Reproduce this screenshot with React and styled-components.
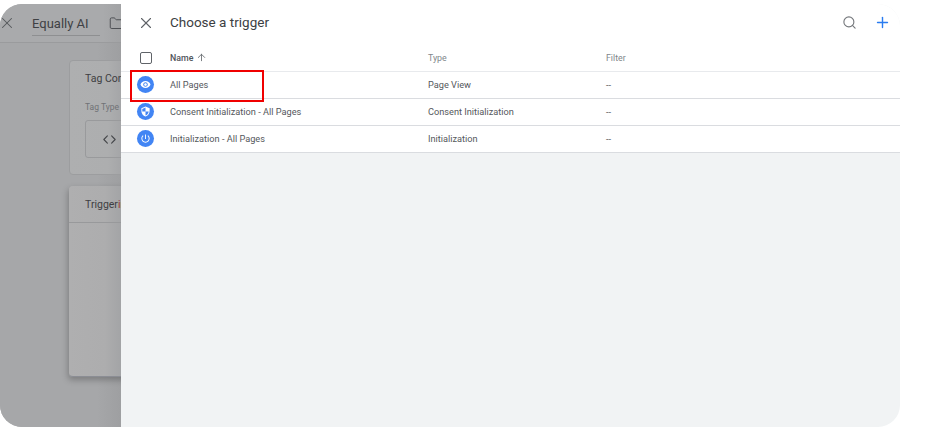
import React from 'react';
import styled, { createGlobalStyle } from 'styled-components';
import { X, Folder, ChevronsLeftRight, Search, Plus, ArrowUp } from 'lucide-react';

const triggers = [
    { name: 'All Pages', type: 'Page View', icon: 'eye' },
    { name: 'Consent Initialization - All Pages', type: 'Consent Initialization', icon: 'shield' },
    { name: 'Initialization - All Pages', type: 'Initialization', icon: 'power' },
];

const iconPaths = {
    eye: 'M12 4.5C7 4.5 2.73 7.61 1 12c1.73 4.39 6 7.5 11 7.5s9.27-3.11 11-7.5c-1.73-4.39-6-7.5-11-7.5zM12 17c-2.76 0-5-2.24-5-5s2.24-5 5-5 5 2.24 5 5-2.24 5-5 5zm0-8c-1.66 0-3 1.34-3 3s1.34 3 3 3 3-1.34 3-3-1.34-3-3-3z',
    shield: 'M12 1L3 5v6c0 5.55 3.84 10.74 9 12 5.16-1.26 9-6.45 9-12V5l-9-4zm0 10.99h7c-.53 4.12-3.28 7.79-7 8.94V12H5V6.3l7-3.11v8.8z',
    power: 'M13 3h-2v10h2V3zm4.83 2.17l-1.42 1.42C17.99 7.86 19 9.81 19 12c0 3.87-3.13 7-7 7s-7-3.13-7-7c0-2.19 1.01-4.14 2.58-5.42L6.17 5.17C4.23 6.82 3 9.26 3 12c0 4.97 4.03 9 9 9s9-4.03 9-9c0-2.74-1.23-5.18-3.17-6.83z',
};

export default function App() {
    return (
        <>
            <GlobalStyle />
            <Shell>
                <Backdrop>
                    <BackHeader>
                        <BackClose>
                            <X size={18} strokeWidth={1.4} color="#55585c" />
                        </BackClose>
                        <BackName>Equally AI</BackName>
                        <BackFolder>
                            <Folder size={15} strokeWidth={1.5} color="#4a4c50" />
                        </BackFolder>
                    </BackHeader>
                    <BackBody>
                        <TagCard>
                            <CardLabel>Tag Configuration</CardLabel>
                            <SmallLabel>Tag Type</SmallLabel>
                            <TypeBox>
                                <ChevronsLeftRight size={17} strokeWidth={1.6} color="#45474a" />
                            </TypeBox>
                        </TagCard>
                        <TriggerCard>
                            <TriggerHead>
                                <CardLabel>
                                    Trigger<TriggerTail>ing</TriggerTail>
                                </CardLabel>
                            </TriggerHead>
                        </TriggerCard>
                    </BackBody>
                </Backdrop>
                <Panel>
                    <PanelHeader>
                        <CloseSlot>
                            <X size={18} strokeWidth={1.5} color="#5f6368" />
                        </CloseSlot>
                        <PanelTitle>Choose a trigger</PanelTitle>
                        <Actions>
                            <Search size={15} strokeWidth={1.8} color="#75787c" />
                            <Plus size={17} strokeWidth={2} color="#2a7cf0" />
                        </Actions>
                    </PanelHeader>
                    <Table>
                        <HeadRow>
                            <Cell>
                                <Checkbox />
                            </Cell>
                            <NameHead>
                                Name <ArrowUp size={11} strokeWidth={1.8} color="#5f6368" />
                            </NameHead>
                            <HeadText>Type</HeadText>
                            <HeadText>Filter</HeadText>
                        </HeadRow>
                        {triggers.map((t) => (
                            <Row key={t.name}>
                                <Cell>
                                    <IconDot>
                                        <svg width="11" height="11" viewBox="0 0 24 24" fill="#fff">
                                            <path d={iconPaths[t.icon]} />
                                        </svg>
                                    </IconDot>
                                </Cell>
                                <RowText>{t.name}</RowText>
                                <RowText>{t.type}</RowText>
                                <RowText>--</RowText>
                            </Row>
                        ))}
                    </Table>
                    <Highlight />
                </Panel>
            </Shell>
        </>
    );
}

const GlobalStyle = createGlobalStyle`
    html, body {
        margin: 0;
        background: #fff;
    }
    body {
        font-family: Roboto, 'Liberation Sans', sans-serif;
    }
`;

const Shell = styled.div`
    display: flex;
    width: 900px;
    height: 423px;
    margin-top: 4px;
    border-radius: 22px;
    overflow: hidden;
    position: relative;
`;

const Backdrop = styled.div`
    width: 121px;
    flex: none;
    display: flex;
    flex-direction: column;
    overflow: hidden;
    background: #a6a7a9;
`;

const BackHeader = styled.div`
    height: 39px;
    flex: none;
    display: flex;
    align-items: center;
    box-sizing: border-box;
    background: linear-gradient(to right, #a9aaac 85%, #a2a3a5 100%);
    border-bottom: 1px solid #9a9b9d;
`;

const BackClose = styled.div`
    flex: none;
    display: flex;
    margin-left: -2px;
`;

const BackName = styled.div`
    flex: none;
    width: 68px;
    margin-left: 16px;
    padding: 4px 0 4px;
    font-size: 13px;
    color: #3f4144;
    border-bottom: 1px solid #8e8f91;
    white-space: nowrap;
    position: relative;
    top: 1px;
`;

const BackFolder = styled.div`
    flex: none;
    display: flex;
    margin-left: 9px;
`;

const BackBody = styled.div`
    flex: 1;
    display: flex;
    flex-direction: column;
    gap: 11px;
    padding: 17px 0 0 69px;
    background: linear-gradient(to right, #a6a7a9 80%, #9e9fa1 100%);
`;

const TagCard = styled.div`
    width: 200px;
    height: 115px;
    box-sizing: border-box;
    padding: 11px 15px;
    background: linear-gradient(to right, #aeafb0 0, #adaeaf 38px, #a4a5a7 52px);
    border: 1px solid #9c9d9f;
    border-radius: 4px;
`;

const CardLabel = styled.div`
    font-size: 10.5px;
    line-height: 13px;
    color: #3e3e42;
    white-space: nowrap;
`;

const SmallLabel = styled.div`
    margin-top: 17px;
    font-size: 8.5px;
    line-height: 10px;
    color: #707276;
`;

const TypeBox = styled.div`
    display: flex;
    align-items: center;
    width: 120px;
    height: 38px;
    margin-top: 8px;
    padding-left: 15px;
    box-sizing: border-box;
    border: 1px solid #999a9c;
    border-radius: 3px;
`;

const TriggerCard = styled.div`
    width: 200px;
    height: 191px;
    box-sizing: border-box;
    background: linear-gradient(to right, #afafb0 0, #adadae 36px, #a3a4a6 52px);
    border-bottom: 1px solid #8b8d94;
    border-radius: 4px;
    box-shadow: -1px 3px 6px rgba(0, 0, 0, 0.25);
`;

const TriggerHead = styled.div`
    height: 37px;
    box-sizing: border-box;
    padding: 12px 16px 0;
    border-bottom: 1px solid #98999b;
`;

const TriggerTail = styled.span`
    color: #9c3b2c;
`;

const Panel = styled.div`
    flex: 1;
    display: flex;
    flex-direction: column;
    position: relative;
    background: #f1f3f4;
`;

const PanelHeader = styled.div`
    height: 38px;
    flex: none;
    display: flex;
    align-items: center;
    background: #fff;
`;

const CloseSlot = styled.div`
    width: 49px;
    flex: none;
    display: flex;
    justify-content: center;
`;

const PanelTitle = styled.div`
    flex: 1;
    font-size: 13.5px;
    color: #3c4043;
    position: relative;
    top: -1px;
`;

const Actions = styled.div`
    display: flex;
    align-items: center;
    gap: 17px;
    padding-right: 9px;
    position: relative;
    top: -1px;
`;

const Table = styled.div`
    display: flex;
    flex-direction: column;
    background: #fff;
`;

const HeadRow = styled.div`
    display: grid;
    grid-template-columns: 49px 258px 178px 1fr;
    align-items: center;
    box-sizing: border-box;
    height: 30px;
    padding-top: 2px;
    border-bottom: 1px solid #e8eaed;
`;

const Row = styled.div`
    display: grid;
    grid-template-columns: 49px 258px 178px 1fr;
    align-items: center;
    box-sizing: border-box;
    height: 27px;
    padding-bottom: 2px;
    border-bottom: 1px solid #dadce0;
`;

const Cell = styled.div`
    display: flex;
    justify-content: center;
`;

const Checkbox = styled.div`
    width: 10px;
    height: 10px;
    border: 1.5px solid #5f6368;
    border-radius: 2px;
`;

const HeadText = styled.div`
    font-size: 8.8px;
    color: #80868b;
`;

const NameHead = styled(HeadText)`
    display: flex;
    align-items: center;
    gap: 3px;
    color: #50545a;
    font-weight: 500;
`;

const IconDot = styled.div`
    width: 17px;
    height: 17px;
    border-radius: 50%;
    display: flex;
    align-items: center;
    justify-content: center;
    background: #4285f4;
`;

const RowText = styled.div`
    font-size: 9.2px;
    color: #55585c;
    white-space: nowrap;
`;

const Highlight = styled.div`
    position: absolute;
    left: 9px;
    top: 66px;
    width: 134px;
    height: 32px;
    box-sizing: border-box;
    border: 2px solid #f00000;
`;
